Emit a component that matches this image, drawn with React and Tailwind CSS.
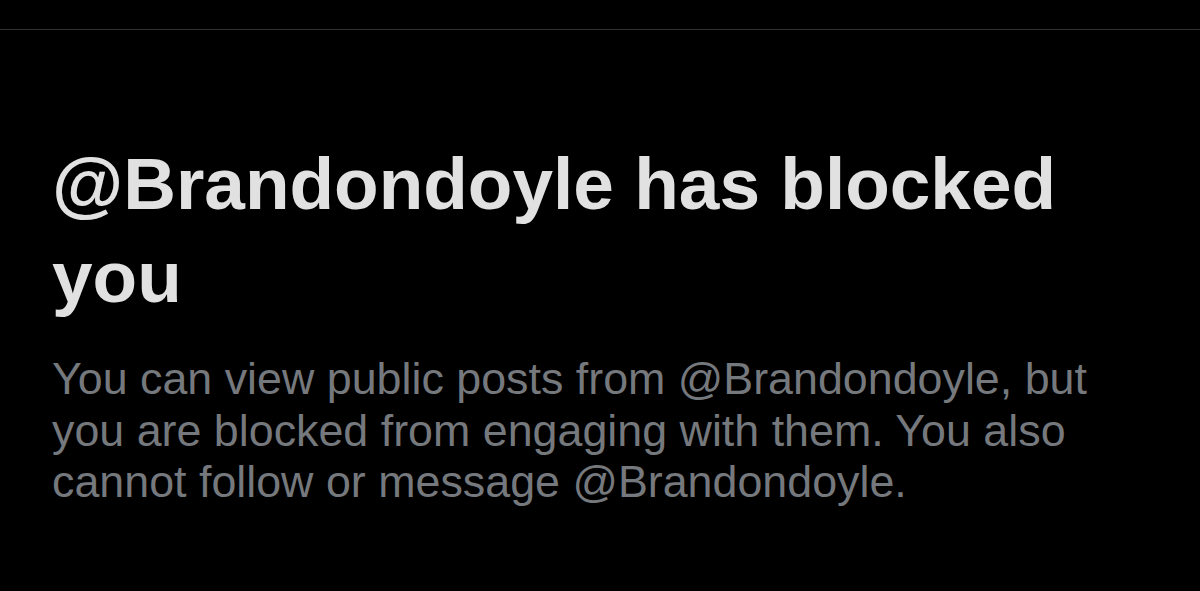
export default function App() {
  return (
    <div className="w-[1200px] h-[591px] bg-black overflow-hidden" style={{ fontFamily: '"Liberation Sans", Arial, sans-serif' }}>
      <div className="h-[29px]" />
      <div className="h-px bg-[#2f3336]" />
      <div className="pl-[52px] pr-[60px] pt-[107px]">
        <h1 className="text-[73px] leading-[93px] font-bold text-[#e1e1e1] tracking-[0px]">
          @Brandondoyle has blocked you
        </h1>
        <p className="mt-[30px] text-[44.8px] leading-[51.5px] text-[#75787c]">
          You can view public posts from @Brandondoyle, but you are blocked from engaging with them. You also cannot follow or message @Brandondoyle.
        </p>
      </div>
    </div>
  );
}
